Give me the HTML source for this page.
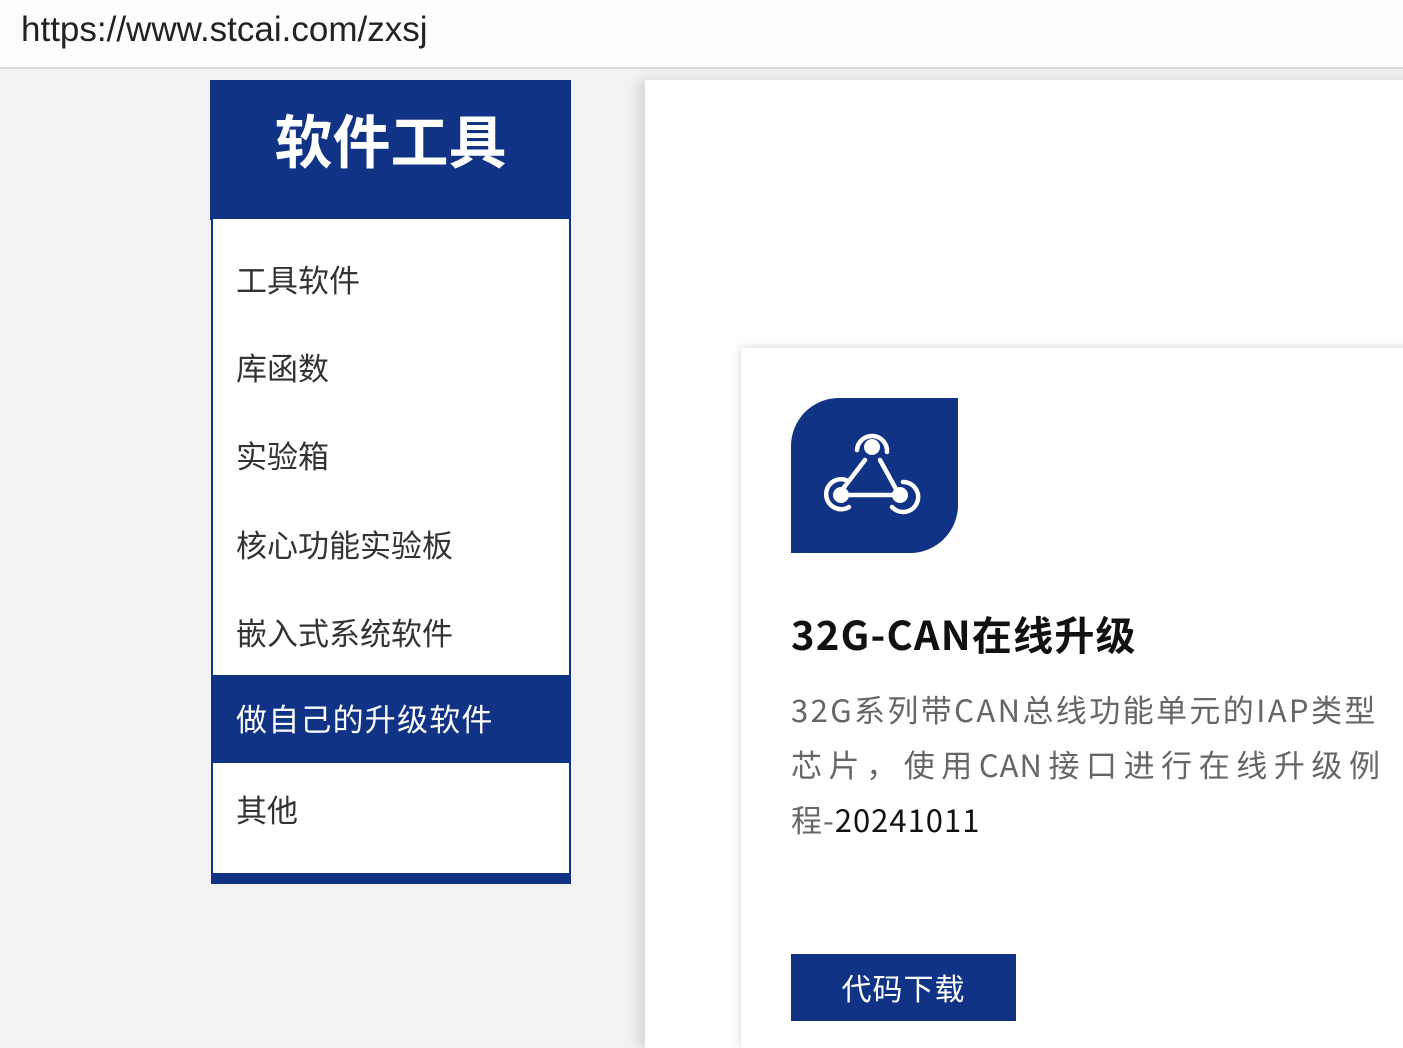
<!DOCTYPE html>
<html><head><meta charset="utf-8"><style>
*{margin:0;padding:0;box-sizing:border-box}
html,body{width:1403px;height:1048px;overflow:hidden}
body{background:#f2f2f2;font-family:"Liberation Sans","Noto Sans CJK SC",sans-serif;position:relative}
.url{position:absolute;left:0;top:0;width:1403px;height:69px;background:#fdfdfd;border-bottom:2px solid #d8d8d8}
.url span{position:absolute;left:21px;top:10px;font-size:35px;color:#222;font-family:"Liberation Sans",sans-serif}
.hdr{position:absolute;left:210px;top:80px;width:361px;height:140px;background:#113385;color:#fff;font-size:58px;font-weight:bold;text-align:center;line-height:116px;font-family:"Noto Sans CJK SC",sans-serif}
.list{position:absolute;left:211px;top:219px;width:360px;height:665px;background:#fff;border:2px solid #113385;border-top:none;border-bottom:11px solid #113385}
.it{position:absolute;left:23px;font-size:31px;color:#333;font-family:"Noto Sans CJK SC",sans-serif;line-height:40px}
.act{position:absolute;left:0;top:456px;width:356px;height:88px;background:#113385;color:#fff;font-size:31px;letter-spacing:1.2px;padding-left:23px;line-height:86px;font-family:"Noto Sans CJK SC",sans-serif}
.panel{position:absolute;left:645px;top:80px;width:800px;height:968px;background:#fff;box-shadow:-6px 0 12px rgba(0,0,0,.12)}
.card{position:absolute;left:741px;top:348px;width:700px;height:700px;background:#fff;box-shadow:0 0 8px rgba(0,0,0,.18)}
.icon{position:absolute;left:791px;top:398px;width:167px;height:155px;background:#113385;border-radius:48px 0 48px 0}
.title{position:absolute;left:791px;top:606px;font-size:40px;font-weight:bold;letter-spacing:1.2px;color:#111;font-family:"Noto Sans CJK SC",sans-serif;line-height:54px}
.desc{position:absolute;left:791px;top:681px;width:590px;font-size:31px;color:#666;line-height:55px;text-align:justify;letter-spacing:1px;font-family:"Noto Sans CJK SC",sans-serif}
.btn{position:absolute;left:791px;top:954px;width:225px;height:67px;background:#113385;color:#fff;font-size:30px;letter-spacing:1px;text-align:center;line-height:67px;font-family:"Noto Sans CJK SC",sans-serif}
</style></head><body>
<div class="url"><span>https://www.stcai.com/zxsj</span></div>
<div class="hdr">软件工具</div>
<div class="list">
<div class="it" style="top:40px">工具软件</div>
<div class="it" style="top:128px">库函数</div>
<div class="it" style="top:216px">实验箱</div>
<div class="it" style="top:305px">核心功能实验板</div>
<div class="it" style="top:393px">嵌入式系统软件</div>
<div class="act">做自己的升级软件</div>
<div class="it" style="top:570px">其他</div>
</div>
<div class="panel"></div>
<div class="card"></div>
<div class="icon"><svg width="167" height="155" viewBox="0 0 167 155">
<g fill="none" stroke="#fff" stroke-width="4.5" stroke-linecap="round">
<path d="M74 62 L51 92 M89 62 L105 91 M57 97 L101 97"/>
<path d="M66 52 A14 14 0 1 1 96 54"/>
<path d="M55 82 A15 15 0 1 0 58 109"/>
<path d="M112 84 A15 15 0 1 1 101 109"/>
</g>
<g fill="#fff"><circle cx="81" cy="49" r="8"/><circle cx="50" cy="97" r="8"/><circle cx="109" cy="97" r="8"/></g>
</svg></div>
<div class="title">32G-CAN在线升级</div>
<div class="desc"><span style="letter-spacing:2.4px;white-space:nowrap">32G系列带CAN总线功能单元的IAP类型</span><br>芯片，使用CAN接口进行在线升级例程-<span style="color:#111">20241011</span></div>
<div class="btn">代码下载</div>
</body></html>
